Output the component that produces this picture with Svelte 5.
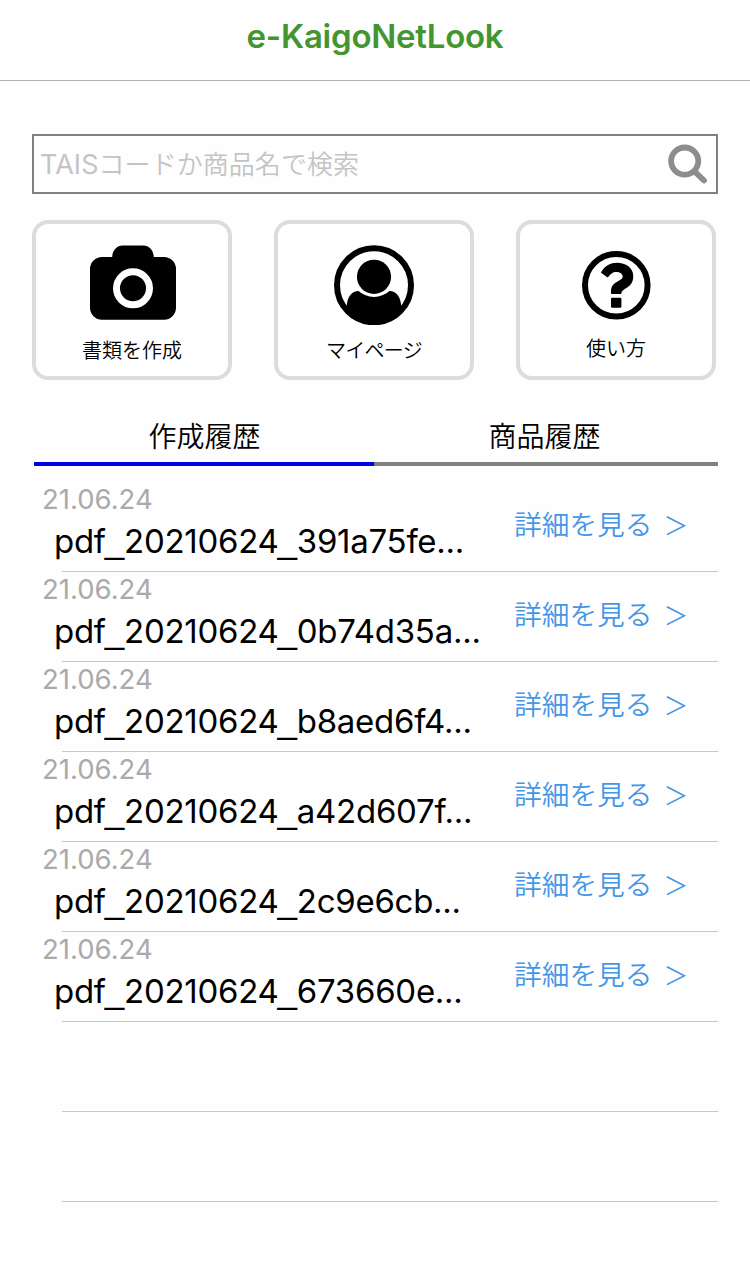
<script>
  const rows = [
    'pdf_20210624_391a75fe...',
    'pdf_20210624_0b74d35a...',
    'pdf_20210624_b8aed6f4...',
    'pdf_20210624_a42d607f...',
    'pdf_20210624_2c9e6cb...',
    'pdf_20210624_673660e...',
    '',
    ''
  ];
</script>

<header><h1>e-KaigoNetLook</h1></header>
<main>
  <div class="search">
    <span class="placeholder"><span class="latin">TAIS</span>コードか商品名で検索</span>
    <svg width="42" height="42" viewBox="0 0 42 42">
      <circle cx="18.7" cy="18.1" r="13.6" fill="none" stroke="#8d8d8d" stroke-width="5.8" />
      <path d="M29 28.800 38 37.500" stroke="#8d8d8d" stroke-width="5.8" stroke-linecap="round" />
    </svg>
  </div>

  <nav class="cards">
    <button class="card camera">
      <svg width="86" height="80" viewBox="0 0 86 80">
        <path d="M12 12h10.200c.2-6.500 4.500-11.500 10.500-11.500h20.600c6 0 10.300 5 10.500 11.500H74a12 12 0 0 1 12 12v38.700a12 12 0 0 1-12 12H12a12 12 0 0 1-12-12V24a12 12 0 0 1 12-12Z" />
        <circle cx="43" cy="43.300" r="16.500" fill="none" stroke="#fff" stroke-width="7" />
      </svg>
      <span>書類を作成</span>
    </button>
    <button class="card mypage">
      <svg width="80" height="80" viewBox="0 0 80 80">
        <circle cx="40" cy="40.300" r="37" fill="none" stroke="#000" stroke-width="6" />
        <circle cx="40" cy="31.800" r="17.100" />
        <path d="M24.500 46C17 46 12.800 53 12.800 62C18 70 28 77 40 77s22-7 27.200-15C67.200 53 63 46 55.500 46C51 49.500 46 51.900 40 51.900S29 49.500 24.500 46Z" />
      </svg>
      <span>マイページ</span>
    </button>
    <button class="card help">
      <svg width="70" height="80" viewBox="0 0 70 80">
        <circle cx="35.300" cy="40.300" r="31.300" fill="none" stroke="#000" stroke-width="6" />
        <path d="M20.300 27C24 20.500 29.500 17.800 36 17.800c8.700 0 16.300 5 16.300 13.200 0 9.300-6 11.200-10.100 14.200-1.500 1.100-1.900 2.200-1.900 3.800H30.800q-.8 0-.8-.8v-1.700c0-6.300 3.500-8.500 7-10.300 3-1.600 4.700-2.500 4.700-4.700 0-2.900-2.900-4.600-6.200-4.600-4 0-6 2.100-8.300 5q-.6.7-1.300.2l-5.500-4.100q-.700-.4-.3-1Z" />
        <rect x="30" y="52.700" width="10.400" height="10" rx="1.300" />
      </svg>
      <span>使い方</span>
    </button>
  </nav>

  <div class="tabs">
    <div class="tab active">作成履歴</div>
    <div class="tab">商品履歴</div>
  </div>

  <ul>
    {#each rows as name}
      <li>
        {#if name}
          <div class="info">
            <time>21.06.24</time>
            <span class="name">{#each name.split('_') as part, i}{#if i}<span class="bar">_</span>{/if}{part}{/each}</span>
          </div>
          <a href="#detail">詳細を見る<span class="arrow">＞</span></a>
        {/if}
      </li>
    {/each}
  </ul>
</main>

<style>
  :global(body) { background: #fefefe; }
  header, main { font-family: Inter, "Noto Sans CJK JP", sans-serif; color: #000; }
  header { box-sizing: border-box; height: 81px; border-bottom: 1px solid #b2b2b2; text-align: center; }
  h1 { margin: 0; padding-top: 14px; font-size: 33px; line-height: 44px; font-weight: 600; color: #43952f; letter-spacing: -.25px; }
  main { padding: 53px 32px 0; }
  .search { box-sizing: border-box; height: 60px; border: 2px solid #808080; display: flex; align-items: center; justify-content: space-between; padding: 0 8px 0 6px; }
  .placeholder { font-family: "Noto Sans CJK JP", sans-serif; font-weight: 350; font-size: 26px; line-height: 40px; letter-spacing: .05px; color: #c4c4c4; white-space: nowrap; }
  .latin { font-family: Inter, sans-serif; font-size: 27px; font-weight: 400; }
  .cards { display: flex; gap: 42px; margin-top: 26px; }
  .card { box-sizing: border-box; width: 200px; height: 160px; border: 4px solid #dcdcdc; border-radius: 16px; background: #fff; padding: 21px 0 0; display: flex; flex-direction: column; align-items: center; justify-content: flex-start; font-family: "Noto Sans CJK JP", sans-serif; font-weight: 350; font-size: 20px; line-height: 30px; color: #000; }
  .card span { margin-top: 10px; }
  .camera svg { margin-left: 2px; }
  .mypage span { letter-spacing: -.7px; }
  .card.help span { margin-top: 8px; }
  .tabs { display: flex; margin: 34px 0 0 2px; }
  .tab { box-sizing: border-box; width: 340px; height: 52px; border-bottom: 4px solid #808080; padding-left: 1px; text-align: center; font-family: "Noto Sans CJK JP", sans-serif; font-weight: 350; font-size: 28px; line-height: 43px; }
  .tab.active { border-color: #0000e6; }
  .tab:last-child { width: 344px; padding-right: 4px; }
  ul { list-style: none; margin: 0; padding: 16px 0 0; }
  li { height: 90px; display: flex; background: linear-gradient(#c8c8c8, #c8c8c8) 30px 89px / 656px 1px no-repeat; }
  .info { width: 482px; display: flex; flex-direction: column; white-space: nowrap; }
  time { padding: 2px 0 0 10px; font-size: 27.500px; line-height: 30px; color: #aaa; }
  .name { padding: 6px 0 0 22px; font-size: 33px; line-height: 42px; letter-spacing: -.27px; }
  .bar { font-family: "Liberation Sans", sans-serif; font-size: 35px; line-height: 0; margin-left: -1px; }
  a { padding-top: 20px; font-family: "Noto Sans CJK JP", sans-serif; font-weight: 350; font-size: 27.700px; line-height: 42px; color: #4496e6; text-decoration: none; white-space: nowrap; }
  .arrow { margin-left: 11px; font-size: 25px; }
</style>
